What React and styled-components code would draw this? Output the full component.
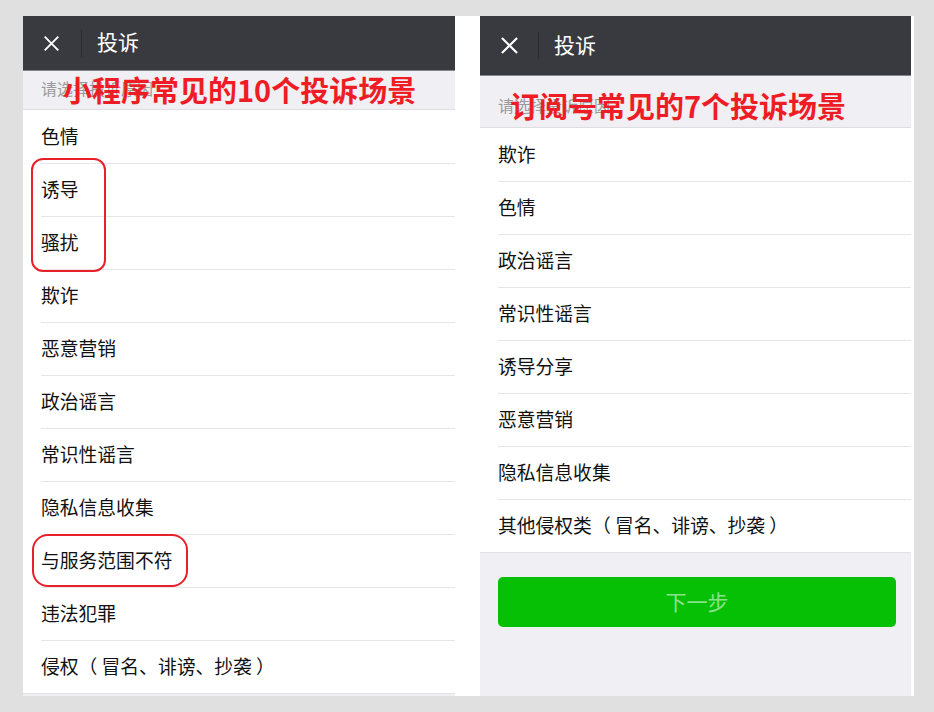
import React from "react";
import styled, { createGlobalStyle } from "styled-components";

const GlobalStyle = createGlobalStyle`
  html, body {
    margin: 0;
    padding: 0;
    background: #e0e0e0;
  }
  body {
    font-family: "Noto Sans CJK SC", "Noto Sans", sans-serif;
  }
`;

const Card = styled.div`
  display: flex;
  gap: 25px;
  width: 891px;
  height: 680px;
  margin: 16px 0 0 23px;
  padding-right: 3px;
  background: #ffffff;
  box-sizing: border-box;
`;

const Phone = styled.div`
  position: relative;
  display: flex;
  flex-direction: column;
  width: ${(p) => p.$width}px;
  background: ${(p) => p.$bg};
`;

const Header = styled.div`
  display: flex;
  align-items: center;
  height: ${(p) => p.$height}px;
  padding-left: 20px;
  background: #393a3f;
  border-bottom: 1px solid #85858b;
  box-sizing: border-box;
  flex-shrink: 0;
`;

const CloseIcon = styled.svg`
  width: ${(p) => p.$size}px;
  height: ${(p) => p.$size}px;
  flex-shrink: 0;
`;

const Divider = styled.div`
  width: 1px;
  height: 27px;
  margin: 0 15px 0 ${(p) => p.$gap}px;
  background: #2b2c30;
`;

const Title = styled.div`
  color: #ffffff;
  font-size: 21px;
  line-height: 1;
  margin-top: -3px;
`;

const SubHeader = styled.div`
  position: relative;
  height: ${(p) => p.$height}px;
  padding-left: 18px;
  display: flex;
  align-items: ${(p) => (p.$bottom ? "flex-end" : "center")};
  padding-bottom: ${(p) => (p.$bottom ? "10px" : "4px")};
  background: #f0eff4;
  border-bottom: 1px solid #dedee2;
  box-sizing: border-box;
  color: #9a9a9a;
  font-size: 16px;
  flex-shrink: 0;
`;

const RedNote = styled.div`
  position: absolute;
  left: ${(p) => p.$left}px;
  top: ${(p) => p.$top}px;
  color: #ee1c25;
  font-size: 29px;
  font-weight: 700;
  line-height: 1;
  white-space: nowrap;
`;

const List = styled.div`
  display: flex;
  flex-direction: column;
  background: #ffffff;
`;

const Row = styled.div`
  height: 53px;
  margin-left: 18px;
  padding-bottom: 3px;
  display: flex;
  align-items: center;
  color: #111111;
  font-size: 18.8px;
  white-space: pre;
  box-sizing: border-box;
  border-top: ${(p) => (p.$first ? "none" : "1px solid #e6e6e6")};
`;

const Footer = styled.div`
  flex: 1;
  background: #f0eff4;
  border-top: 1px solid #e3e3e6;
  padding: 24px 15px 0 18px;
`;

const NextButton = styled.div`
  height: 50px;
  padding-bottom: 3px;
  box-sizing: border-box;
  border-radius: 5px;
  background: #05c005;
  color: rgba(255, 255, 255, 0.55);
  font-size: 21px;
  display: flex;
  align-items: center;
  justify-content: center;
`;

const Highlight = styled.div`
  position: absolute;
  left: ${(p) => p.$left}px;
  top: ${(p) => p.$top}px;
  width: ${(p) => p.$w}px;
  height: ${(p) => p.$h}px;
  border: 2px solid #e8202a;
  border-radius: ${(p) => p.$r}px;
  box-sizing: border-box;
`;

const Close = ({ size }) => (
  <CloseIcon $size={size} viewBox="0 0 20 20">
    <path d="M2 2 L18 18 M18 2 L2 18" stroke="#ffffff" strokeWidth="2.2" fill="none" />
  </CloseIcon>
);

const miniItems = [
  "色情",
  "诱导",
  "骚扰",
  "欺诈",
  "恶意营销",
  "政治谣言",
  "常识性谣言",
  "隐私信息收集",
  "与服务范围不符",
  "违法犯罪",
  "侵权（ 冒名、诽谤、抄袭 ）",
];

const subItems = [
  "欺诈",
  "色情",
  "政治谣言",
  "常识性谣言",
  "诱导分享",
  "恶意营销",
  "隐私信息收集",
  "其他侵权类（ 冒名、诽谤、抄袭 ）",
];

export default function App() {
  return (
    <>
      <GlobalStyle />
      <Card>
        <Phone $width={432} $bg="#ffffff">
          <Header $height={55}>
            <Close size={17} />
            <Divider $gap={21} />
            <Title>投诉</Title>
          </Header>
          <SubHeader $height={39}>
            请选择投诉原因
            <RedNote $left={40} $top={4}>小程序常见的10个投诉场景</RedNote>
          </SubHeader>
          <List>
            {miniItems.map((t, i) => (
              <Row key={t} $first={i === 0}>
                {t}
              </Row>
            ))}
          </List>
          <Footer />
          <Highlight $left={8} $top={142} $w={75} $h={114} $r={12} />
          <Highlight $left={9} $top={518} $w={156} $h={53} $r={16} />
        </Phone>
        <Phone $width={431} $bg="#f0eff4">
          <Header $height={60}>
            <Close size={19} />
            <Divider $gap={19} />
            <Title>投诉</Title>
          </Header>
          <SubHeader $height={52} $bottom>
            请选择投诉原因
            <RedNote $left={30} $top={15}>订阅号常见的7个投诉场景</RedNote>
          </SubHeader>
          <List>
            {subItems.map((t, i) => (
              <Row key={t} $first={i === 0}>
                {t}
              </Row>
            ))}
          </List>
          <Footer>
            <NextButton>下一步</NextButton>
          </Footer>
        </Phone>
      </Card>
    </>
  );
}
